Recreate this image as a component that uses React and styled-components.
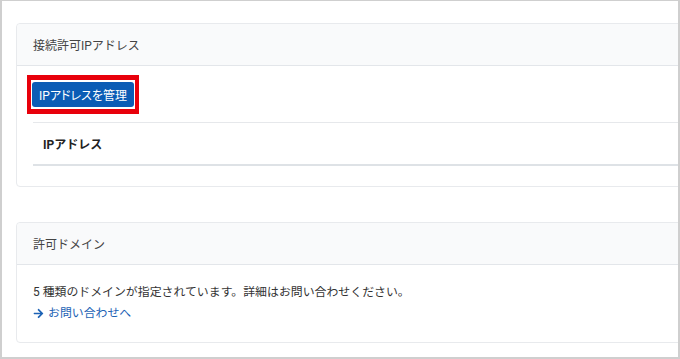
import styled, { createGlobalStyle } from 'styled-components'
import { FaArrowRight } from 'react-icons/fa'

const GlobalStyle = createGlobalStyle`
  html, body {
    margin: 0;
    padding: 0;
    background: #fff;
  }
  body {
    font-family: Roboto, "Noto Sans CJK JP", sans-serif;
    color: #333;
  }
`

const Frame = styled.div`
  box-sizing: border-box;
  width: 680px;
  height: 359px;
  border: 2px solid #cfcfcf;
  border-top-width: 1px;
  overflow: hidden;
  padding: 22px 0 0 14px;
  display: flex;
  flex-direction: column;
  gap: 35px;
`

const Card = styled.section`
  width: 700px;
  background: #fff;
  border: 1px solid #e8eaed;
  border-radius: 4px;
`

const CardHeader = styled.header`
  height: 41px;
  display: flex;
  align-items: center;
  padding: 0 16px;
  background: #f9fafb;
  border-bottom: 1px solid #e3e6ea;
  border-radius: 4px 4px 0 0;
  font-size: 12px;
  color: #444;
`

const CardBody = styled.div`
  padding: ${({ $dense }) => ($dense ? '16px 16px 20px' : '17px 16px 18px')};
`

const Highlight = styled.span`
  display: inline-block;
  margin: -7px -6px;
  padding: 2px 1px;
  border: 5px solid #e8000b;
  border-left-width: 4px;
  border-right-width: 4px;
`

const Button = styled.button`
  display: block;
  height: 25px;
  padding: 0 7px;
  border: none;
  border-radius: 3px;
  background: #0b5cb5;
  color: #fff;
  font-family: inherit;
  font-feature-settings: "palt";
  font-size: 12px;
  cursor: pointer;
`

const Table = styled.div`
  margin-top: 15px;
  border-top: 1px solid #e6e8eb;
  border-bottom: 2px solid #dee2e6;
`

const HeadCell = styled.div`
  height: 41px;
  display: flex;
  align-items: center;
  padding: 0 10px;
  font-size: 12px;
  font-weight: 700;
  color: #222;
`

const Text = styled.p`
  margin: 0;
  font-size: 11.9px;
  line-height: 21px;
  color: #333;
`

const ContactLink = styled.a`
  display: inline-flex;
  align-items: center;
  gap: 4px;
  font-size: 11.9px;
  line-height: 21px;
  color: #1c62b5;
  text-decoration: none;
`

export default function App() {
  return (
    <>
      <GlobalStyle />
      <Frame>
        <Card>
          <CardHeader>接続許可IPアドレス</CardHeader>
          <CardBody $dense>
            <Highlight>
              <Button>IPアドレスを管理</Button>
            </Highlight>
            <Table>
              <HeadCell>IPアドレス</HeadCell>
            </Table>
          </CardBody>
        </Card>
        <Card>
          <CardHeader>許可ドメイン</CardHeader>
          <CardBody>
            <Text>5 種類のドメインが指定されています。詳細はお問い合わせください。</Text>
            <ContactLink href="#">
              <FaArrowRight size={11} />
              お問い合わせへ
            </ContactLink>
          </CardBody>
        </Card>
      </Frame>
    </>
  )
}
